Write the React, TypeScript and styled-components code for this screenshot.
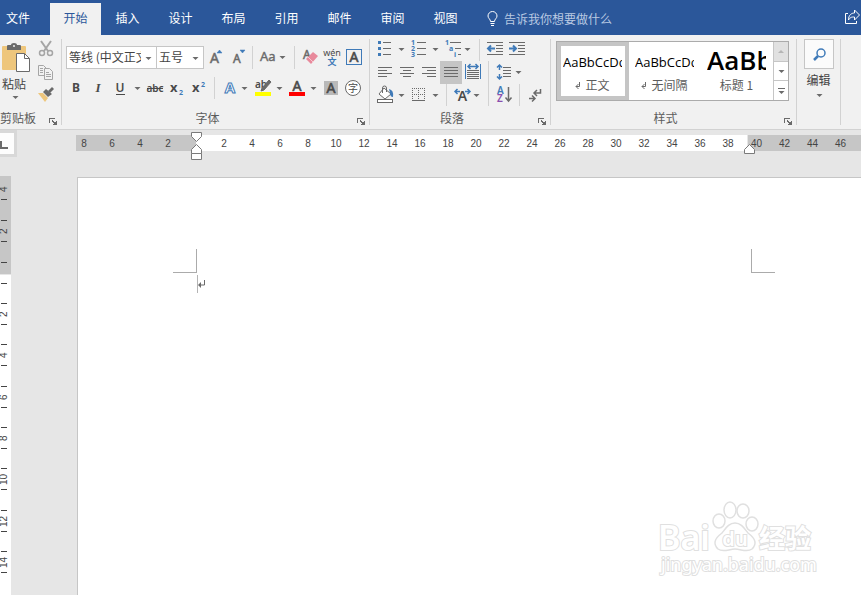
import React from "react";
import styled, { createGlobalStyle } from "styled-components";

const UI_FONT = '"Noto Sans", "Noto Sans CJK SC", sans-serif';
const CJK_FONT = '"Noto Sans CJK SC", sans-serif';
const PREVIEW_FONT = '"Open Sans", "Noto Sans CJK SC", sans-serif';

const GREY = "#6a6a6a";
const DARK = "#4a4a4a";
const BLUE = "#3f7ab8";

const GlobalStyle = createGlobalStyle`
  *, *::before, *::after { box-sizing: border-box; }
  body { margin: 0; overflow: hidden; font-family: ${CJK_FONT}; font-size: 12px; color: #444; }
  button, select { font: inherit; color: inherit; }
  p { margin: 0; }
`;

const AppShell = styled.div`
  display: flex;
  flex-direction: column;
  height: 100vh;
  background: #e6e6e6;
  overflow: hidden;
`;

/* ---------- tab strip ---------- */

const TabStrip = styled.nav`
  display: flex;
  align-items: flex-end;
  flex: none;
  height: 35px;
  background: #2b579a;
`;

const Tab = styled.button<{ $active?: boolean; $file?: boolean }>`
  width: ${(p) => (p.$file ? 50 : p.$active ? 51 : 53)}px;
  height: 32px;
  padding: ${(p) => (p.$file ? "0 0 4px 6px" : "0 0 4px")};
  text-align: ${(p) => (p.$file ? "left" : "center")};
  border: 0;
  background: ${(p) => (p.$active ? "#f1f1f1" : "transparent")};
  color: ${(p) => (p.$active ? "#2b579a" : "#fff")};
`;

const TellMe = styled.button`
  display: flex;
  align-items: center;
  gap: 6px;
  height: 32px;
  margin-left: 15px;
  padding: 0 0 2px;
  border: 0;
  background: transparent;
  color: #b9c9e2;
`;

const ShareButton = styled.button`
  width: 17px;
  height: 32px;
  margin-left: auto;
  padding: 0;
  border: 0;
  background: transparent;
  overflow: hidden;
`;

/* ---------- ribbon ---------- */

const Ribbon = styled.div`
  display: flex;
  flex: none;
  padding: 4px 0;
  height: 95px;
  background: #f1f1f1;
  border-bottom: 1px solid #d2d2d2;
`;

const GroupBox = styled.section<{ $w: number }>`
  display: flex;
  flex-direction: column;
  flex: none;
  width: ${(p) => p.$w}px;
  height: 86px;
  border-right: 1px solid #d2d2d2;
`;

const GroupBody = styled.div`
  display: flex;
  flex: 1;
`;

const GroupFooter = styled.div`
  display: flex;
  align-items: flex-end;
  height: 16px;
`;

const GroupLabel = styled.span<{ $start?: boolean }>`
  flex: 1;
  padding-right: ${(p) => (p.$start ? 0 : 4)}px;
  line-height: 14px;
  text-align: ${(p) => (p.$start ? "left" : "center")};
  color: #5c5c5c;
`;

const Launcher = styled.button`
  width: 12px;
  height: 8px;
  padding: 0;
  border: 0;
  background: transparent;
  display: flex;
`;

const Rows = styled.div<{ $gap: number; $pad: string }>`
  display: flex;
  flex-direction: column;
  gap: ${(p) => p.$gap}px;
  padding: ${(p) => p.$pad};
`;

const ToolRow = styled.div<{ $h: number }>`
  display: flex;
  height: ${(p) => p.$h}px;
`;

const ToolButton = styled.button<{ $on?: boolean }>`
  display: flex;
  flex: none;
  padding: 0;
  border: 0;
  background: ${(p) => (p.$on ? "#c5c5c5" : "transparent")};
`;

const Divider = styled.span<{ $w: number }>`
  flex: none;
  width: ${(p) => p.$w}px;
  background: linear-gradient(#d2d2d2, #d2d2d2) center / 1px 100% no-repeat;
`;

const Combo = styled.label<{ $w: number }>`
  display: grid;
  width: ${(p) => p.$w}px;
  height: 23px;
  margin-right: -1px;
  border: 1px solid #c6c6c6;
  background: #fff;
  grid-template-columns: 1fr 15px;
  align-items: center;
`;

const ComboSelect = styled.select`
  appearance: none;
  width: 100%;
  height: 21px;
  padding: 0 0 2px 2px;
  border: 0;
  background: transparent;
  overflow: hidden;
`;

const Clipboard = styled.div`
  display: grid;
  grid-template-columns: 31px 29px;
`;

const PasteButton = styled.button`
  display: flex;
  flex-direction: column;
  align-items: center;
  padding: 2px 0 0;
  border: 0;
  background: transparent;
  line-height: 18px;
`;

const PasteText = styled.span`
  width: 100%;
  padding-left: 2px;
  text-align: left;
`;

const Stack = styled.div`
  display: flex;
  flex-direction: column;
`;

const Gallery = styled.div`
  display: flex;
  width: 233px;
  height: 60px;
  margin: 2px 0 0 5px;
  border: 1px solid #ababab;
  background: #fff;
`;

const StyleItem = styled.button<{ $selected?: boolean }>`
  display: flex;
  flex-direction: column;
  align-items: stretch;
  width: 72px;
  padding: 0 3px 0 2px;
  border: 4px solid ${(p) => (p.$selected ? "#c5c5c5" : "transparent")};
  background: #fff;
  color: #5c5c5c;
`;

const Preview = styled.span<{ $heading?: boolean }>`
  height: 30px;
  overflow: hidden;
  text-align: left;
  white-space: nowrap;
  color: #000;
  font-family: ${PREVIEW_FONT};
  font-size: ${(p) => (p.$heading ? 26 : 13)}px;
  font-weight: ${(p) => (p.$heading ? 600 : 400)};
  line-height: ${(p) => (p.$heading ? 28 : 32)}px;
`;

const StyleName = styled.span`
  display: flex;
  justify-content: center;
  align-items: center;
  gap: 4px;
  line-height: 18px;
  white-space: nowrap;
`;

const GalleryScroll = styled.div`
  display: grid;
  grid-template-rows: 20px 19px 1fr;
  width: 15px;
  border-left: 1px solid #c6c6c6;
`;

const ScrollStep = styled.button<{ $off?: boolean }>`
  display: flex;
  justify-content: center;
  align-items: center;
  padding: 0;
  border: 0;
  border-bottom: 1px solid #c6c6c6;
  background: ${(p) => (p.$off ? "#e1e1e1" : "#fff")};
  &:last-child { border-bottom: 0; }
`;

const EditButton = styled.button`
  display: flex;
  flex-direction: column;
  align-items: center;
  width: 43px;
  padding: 0;
  border: 0;
  background: transparent;
  line-height: 20px;
`;

const EditIcon = styled.span`
  display: flex;
  width: 30px;
  height: 30px;
  margin-bottom: 1px;
  border: 1px solid #c6c6c6;
  background: #fbfbfb;
`;

/* ---------- work area ---------- */

const RulerRow = styled.div`
  display: flex;
  flex: none;
  height: 46px;
`;

const TabSelector = styled.button`
  display: flex;
  width: 17px;
  height: 27px;
  padding: 0;
  border: solid #d8d8d8;
  border-width: 3px 3px 3px 0;
  background: #fdfdfd;
`;

const Ruler = styled.div`
  position: relative;
  display: flex;
  flex: 1;
  height: 16px;
  margin: 5px 0 0 59px;
  font-family: "Liberation Sans", sans-serif;
  font-size: 10px;
  line-height: 18px;
  color: #444;
`;

const RulerPart = styled.div<{ $kind: "left" | "text" | "right" }>`
  display: flex;
  flex: ${(p) => (p.$kind === "right" ? "1" : "none")};
  justify-content: ${(p) => (p.$kind === "left" ? "flex-end" : "flex-start")};
  width: ${(p) => (p.$kind === "left" ? "120px" : p.$kind === "text" ? "552px" : "auto")};
  padding: ${(p) => (p.$kind === "right" ? "0 0 0 3px" : "0 14px")};
  background: ${(p) => (p.$kind === "text" ? "#fff" : "#c6c6c6")};
  border-right: ${(p) => (p.$kind === "text" ? "1px solid #e6e6e6" : "0")};
  overflow: ${(p) => (p.$kind === "right" ? "hidden" : "visible")};
`;

const RulerMark = styled.span<{ $left?: boolean }>`
  flex: none;
  width: 28px;
  text-align: ${(p) => (p.$left ? "left" : "center")};
`;

const IndentMarker = styled.svg<{ $x: number; $y: number }>`
  position: absolute;
  left: ${(p) => p.$x}px;
  top: ${(p) => p.$y}px;
`;

const WorkArea = styled.div`
  display: flex;
  flex: 1;
  min-height: 0;
`;

const SideRuler = styled.div`
  display: flex;
  flex-direction: column;
  flex: none;
  width: 11px;
  font-family: "Liberation Sans", sans-serif;
  font-size: 10px;
  color: #444;
  overflow: hidden;
`;

const SideMargin = styled.div`
  display: flex;
  flex-direction: column;
  flex: none;
  height: 98px;
  padding-top: 3px;
  background: #c6c6c6;
`;

const SideText = styled.div`
  flex: 1;
  padding-top: 8px;
  margin-top: 1px;
  background: #fff;
`;

const SideCells = styled.div`
  display: grid;
  grid-template-rows: repeat(7, 1fr);
  height: 290px;
  margin-top: 9px;
`;

const SideCell = styled.div`
  display: flex;
  flex-direction: column;
  justify-content: center;
`;

const Tick = styled.i<{ $gap?: number }>`
  display: block;
  flex: none;
  width: 6px;
  height: 1px;
  margin: 0 0 ${(p) => p.$gap || 0}px 1px;
  background: #444;
`;

const SideNumber = styled.span`
  display: block;
  width: 8px;
  height: 20px;
  line-height: 8px;
  text-align: center;
  writing-mode: vertical-rl;
  transform: rotate(180deg);
`;

const Page = styled.main`
  position: relative;
  flex: 1;
  margin: 1px 0 0 66px;
  padding: 71px 0 0 95px;
  border: solid #c6c6c6;
  border-width: 1px 0 0 1px;
  background: #fff;
`;

const CropMarks = styled.div`
  display: grid;
  grid-template-columns: 24px 554px 24px;
  height: 24px;
`;

const CropMark = styled.i<{ $side: "left" | "right" }>`
  border: solid #ababab;
  border-width: ${(p) => (p.$side === "left" ? "0 1px 1px 0" : "0 0 1px 1px")};
`;

const TextLine = styled.p`
  display: flex;
  align-items: flex-start;
  height: 18px;
  margin: 2px 0 0 24px;
  padding-top: 4px;
  border-left: 1px solid #b4b4b4;
`;

const Watermark = styled.svg`
  position: absolute;
  right: 40px;
  bottom: 10px;
`;

/* ---------- drawings ---------- */

function Caret({ x, y, fill = GREY }: { x: number; y: number; fill?: string }) {
  return <path d={`M${x - 2.5} ${y - 1}h6l-3 3z`} fill={fill} />;
}

type ToolProps = {
  name: string;
  w: number;
  h?: number;
  on?: boolean;
  children: React.ReactNode;
};

function Tool({ name, w, h = 22, on, children }: ToolProps) {
  return (
    <ToolButton aria-label={name} title={name} $on={on}>
      <svg width={w} height={h} fill="none" fontFamily={UI_FONT}>
        {children}
      </svg>
    </ToolButton>
  );
}

function Lines({ rows, color = GREY }: { rows: [number, number, number][]; color?: string }) {
  return (
    <path
      stroke={color}
      shapeRendering="crispEdges"
      d={rows.map(([x1, x2, y]) => `M${x1} ${y + 0.5}H${x2}`).join("")}
    />
  );
}

type GroupProps = {
  label: string;
  w: number;
  start?: boolean;
  launcher?: boolean;
  children: React.ReactNode;
};

function Group({ label, w, start, launcher = true, children }: GroupProps) {
  return (
    <GroupBox $w={w} aria-label={label}>
      <GroupBody>{children}</GroupBody>
      {launcher && (
        <GroupFooter>
          <GroupLabel $start={start}>{label}</GroupLabel>
          <Launcher aria-label={`${label}设置`}>
            <svg width="8" height="8" fill="none" stroke={GREY} shapeRendering="crispEdges">
              <path d="M.5 6V1.500H6M3 3.500l4 4M7.500 4v3.500H4" />
              <path d="M5 5h2v2H5z" fill={GREY} stroke="none" />
            </svg>
          </Launcher>
        </GroupFooter>
      )}
    </GroupBox>
  );
}

/* ---------- groups ---------- */

function ClipboardGroup() {
  return (
    <Group label="剪贴板" w={62} start>
      <Clipboard>
        <PasteButton>
          <svg width="31" height="34" fill="none">
            <path d="M3 5h22q1 0 1 1v23H3q-1 0-1-1V6q0-1 1-1z" fill="#eec67c" />
            <path d="M7 9V5q0-1 1-1h3q0-2 3-2t3 2h3q1 0 1 1v4z" fill="#6a6a6a" />
            <circle cx="14" cy="5" r="1" fill="#f1f1f1" />
            <path d="M16.500 12.500h8l5 5v13h-13z" fill="#fff" stroke="#6a6a6a" />
            <path d="M24.500 12.500v5h5" stroke="#6a6a6a" />
          </svg>
          <PasteText>粘贴</PasteText>
          <svg width="31" height="8">
            <Caret x={15} y={4} />
          </svg>
        </PasteButton>
        <Stack>
          <Tool name="剪切" w={29} h={22}>
            <g stroke="#a5a5a5" strokeWidth="1.500">
              <path d="M10 2l7 10M20 2l-7 10" strokeWidth="2" />
              <circle cx="11" cy="14" r="2.500" />
              <circle cx="19" cy="14" r="2.500" />
            </g>
          </Tool>
          <Tool name="复制" w={29} h={23}>
            <g stroke="#a5a5a5" fill="#f1f1f1">
              <path d="M7.500 4.500h5l3 3v7h-8z" />
              <path d="M13.500 7.500h5l3 3v8h-8z" />
              <path d="M15 11.500h3M15 13.500h5M15 15.500h5M9 7.500h3M9 9.500h3M9 11.500h3" />
            </g>
          </Tool>
          <Tool name="格式刷" w={29} h={22}>
            <path d="M7 9l5 0 5 5-3 4z" fill="#eec67c" />
            <path d="M12 8l3-3 6 5-4 3z" fill="#6a6a6a" />
            <path d="M17 7l4-4 2 2-4 4z" fill="#6a6a6a" />
          </Tool>
        </Stack>
      </Clipboard>
    </Group>
  );
}

function FontGroup() {
  return (
    <Group label="字体" w={308}>
      <Rows $gap={8} $pad="7px 0 0 4px">
        <ToolRow $h={23}>
          <Combo $w={91}>
            <ComboSelect aria-label="字体名称">
              <option>等线 (中文正文)</option>
            </ComboSelect>
            <svg width="15" height="20"><Caret x={7} y={10} /></svg>
          </Combo>
          <Combo $w={48}>
            <ComboSelect aria-label="字号">
              <option>五号</option>
            </ComboSelect>
            <svg width="15" height="20"><Caret x={7} y={10} /></svg>
          </Combo>
          <Tool name="增大字号" w={24}>
            <text x="7" y="17" fontSize="14" fill={GREY} stroke={GREY} strokeWidth=".5">A</text>
            <path d="M14 7h5l-2.500-3z" fill={BLUE} stroke={BLUE} strokeWidth=".5" />
          </Tool>
          <Tool name="缩小字号" w={22}>
            <text x="6" y="17" fontSize="12" fill={GREY} stroke={GREY} strokeWidth=".5">A</text>
            <path d="M13 4h5l-2.500 3z" fill={BLUE} stroke={BLUE} strokeWidth=".5" />
          </Tool>
          <Divider $w={7} />
          <Tool name="更改大小写" w={34}>
            <text x="4" y="15" fontSize="13" fill={GREY} stroke={GREY} strokeWidth=".4">Aa</text>
            <Caret x={26} y={11} />
          </Tool>
          <Divider $w={9} />
          <Tool name="清除所有格式" w={22}>
            <text x="4" y="13" fontSize="12" fill={GREY} stroke={GREY} strokeWidth=".5">A</text>
            <path d="M14 6l5 4-7 8-5-5z" fill="#e8899b" />
            <path d="M9 11l5 5" stroke="#f7c8d1" />
          </Tool>
          <Tool name="拼音指南" w={22}>
            <text x="11" y="10" fontSize="9" textAnchor="middle" fill={DARK}>wén</text>
            <text x="11" y="19" fontSize="9" fontWeight="700" textAnchor="middle" fill={BLUE}>文</text>
          </Tool>
          <Tool name="字符边框" w={22}>
            <rect x="3.500" y="3.500" width="15" height="15" stroke={BLUE} />
            <text x="11" y="16" fontSize="14" textAnchor="middle" fill={DARK} stroke={DARK} strokeWidth=".6">A</text>
          </Tool>
        </ToolRow>
        <ToolRow $h={22}>
          <Tool name="加粗" w={21}>
            <text x="10" y="15" fontSize="12" fontWeight="700" textAnchor="middle" fill={DARK}>B</text>
          </Tool>
          <Tool name="倾斜" w={22}>
            <text x="11" y="15" fontSize="13" fontWeight="700" fontStyle="italic" textAnchor="middle" fill={DARK} fontFamily='"Liberation Serif", serif'>I</text>
          </Tool>
          <Tool name="下划线" w={35}>
            <text x="11" y="15" fontSize="12" fontWeight="600" textAnchor="middle" fill={DARK}>U</text>
            <Lines rows={[[7, 16, 17]]} color={DARK} />
            <Caret x={28} y={11} />
          </Tool>
          <Tool name="删除线" w={22}>
            <text x="11" y="15" fontSize="10" fontWeight="600" textAnchor="middle" fill={DARK}>abc</text>
            <Lines rows={[[3, 19, 11]]} color={DARK} />
          </Tool>
          <Tool name="下标" w={22}>
            <text x="4" y="15" fontSize="13" fontWeight="700" fill={DARK}>x</text>
            <text x="13" y="18" fontSize="7" fontWeight="700" fill={BLUE}>2</text>
          </Tool>
          <Tool name="上标" w={22}>
            <text x="4" y="15" fontSize="13" fontWeight="700" fill={DARK}>x</text>
            <text x="13" y="10" fontSize="7" fontWeight="700" fill={BLUE}>2</text>
          </Tool>
          <Divider $w={9} />
          <Tool name="文本效果" w={33}>
            <text x="11" y="16" fontSize="15" fontWeight="700" textAnchor="middle" fill="#fff" stroke={BLUE}>A</text>
            <Caret x={25} y={11} />
          </Tool>
          <Tool name="突出显示颜色" w={34}>
            <text x="3" y="11" fontSize="10" fontWeight="600" fill={DARK}>ab</text>
            <path d="M17 3l2 2-7 8-3 1 1-3z" fill={GREY} stroke={GREY} />
            <path d="M3 15h16v4H3z" fill="#ff0" />
            <Caret x={27} y={11} />
          </Tool>
          <Tool name="字体颜色" w={34}>
            <text x="11" y="14" fontSize="14" textAnchor="middle" fill={DARK} stroke={DARK} strokeWidth=".6">A</text>
            <path d="M3 15h16v4H3z" fill="#f00" />
            <Caret x={27} y={11} />
          </Tool>
          <Tool name="字符底纹" w={22}>
            <path d="M4 4h14v14H4z" fill="#b9b9b9" />
            <text x="11" y="16" fontSize="14" textAnchor="middle" fill={DARK} stroke={DARK} strokeWidth=".6">A</text>
          </Tool>
          <Tool name="带圈字符" w={22}>
            <circle cx="11" cy="11" r="7.500" fill="#fff" stroke={GREY} />
            <text x="11" y="15" fontSize="10" textAnchor="middle" fill={DARK}>字</text>
          </Tool>
        </ToolRow>
      </Rows>
    </Group>
  );
}

function ParagraphGroup() {
  return (
    <Group label="段落" w={181}>
      <Rows $gap={0} $pad="0 0 0 3px">
        <ToolRow $h={22}>
          <Tool name="项目符号" w={34}>
            <path d="M5 2h3v3H5zM5 8h3v3H5zM5 14h3v3H5z" fill={BLUE} />
            <Lines rows={[[10, 18, 3], [10, 18, 9], [10, 18, 15]]} />
            <Caret x={28} y={10} />
          </Tool>
          <Tool name="编号" w={34}>
            <g fill={BLUE} fontSize="7" fontWeight="700">
              <text x="4" y="6">1</text>
              <text x="4" y="12">2</text>
              <text x="4" y="18">3</text>
            </g>
            <Lines rows={[[10, 19, 3], [10, 19, 9], [10, 19, 15]]} />
            <Caret x={28} y={10} />
          </Tool>
          <Tool name="多级列表" w={34}>
            <g fill={BLUE} fontSize="7" fontWeight="700">
              <text x="4" y="6">1</text>
              <text x="8" y="12">a</text>
              <text x="13" y="18">i</text>
            </g>
            <Lines rows={[[9, 20, 3], [14, 20, 9], [17, 20, 15]]} />
            <Caret x={26} y={10} />
          </Tool>
          <Divider $w={8} />
          <Tool name="减少缩进量" w={22}>
            <Lines rows={[[4, 20, 3], [13, 20, 6], [13, 20, 9], [13, 20, 12], [4, 20, 15]]} />
            <path d="M12 9.500H5M8 6.500l-3 3 3 3" stroke={BLUE} strokeWidth="2" />
          </Tool>
          <Tool name="增加缩进量" w={22}>
            <Lines rows={[[4, 20, 3], [13, 20, 6], [13, 20, 9], [13, 20, 12], [4, 20, 15]]} />
            <path d="M4 9.500h7M8 6.500l3 3-3 3" stroke={BLUE} strokeWidth="2" />
          </Tool>
        </ToolRow>
        <ToolRow $h={23}>
          <Tool name="左对齐" w={23} h={23}>
            <Lines rows={[[5, 19, 6], [5, 14, 9], [5, 19, 12], [5, 14, 15]]} />
          </Tool>
          <Tool name="居中" w={22} h={23}>
            <Lines rows={[[4, 18, 6], [7, 15, 9], [4, 18, 12], [7, 15, 15]]} />
          </Tool>
          <Tool name="右对齐" w={22} h={23}>
            <Lines rows={[[4, 18, 6], [9, 18, 9], [4, 18, 12], [9, 18, 15]]} />
          </Tool>
          <Tool name="两端对齐" w={22} h={23} on>
            <Lines rows={[[4, 18, 6], [4, 18, 9], [4, 18, 12], [4, 18, 15]]} />
          </Tool>
          <Tool name="分散对齐" w={22} h={23}>
            <path d="M3.500 3v15M18.500 3v15" stroke={BLUE} />
            <path d="M6 5.500h10M8.500 3L6 5.500 8.500 8M13.500 3l2.500 2.500L13.500 8" stroke={BLUE} strokeWidth="1.500" />
            <Lines rows={[[5, 17, 9], [5, 17, 11], [5, 17, 13], [5, 17, 15], [5, 17, 17]]} />
          </Tool>
          <Divider $w={9} />
          <Tool name="行和段落间距" w={34} h={23}>
            <path d="M6.500 4v5M6.500 13v5M4 6.500L6.500 4 9 6.500M4 15.500L6.500 18 9 15.500" stroke={BLUE} strokeWidth="1.500" />
            <Lines rows={[[10, 18, 6], [10, 18, 9], [10, 18, 12], [10, 18, 15]]} />
            <Caret x={25} y={11} />
          </Tool>
        </ToolRow>
        <ToolRow $h={22}>
          <Tool name="底纹" w={34}>
            <path d="M11 4l7 6-6 5-6-5z" fill="#fff" stroke={GREY} />
            <path d="M9.500 9V4q0-2 2-2t2 2v4" stroke={GREY} />
            <path d="M16 5q5 1 4 8-3 0-3-4z" fill={BLUE} />
            <rect x="4.500" y="15.500" width="15" height="3" fill="#fff" stroke={GREY} />
            <Caret x={28} y={11} />
          </Tool>
          <Tool name="边框" w={34}>
            <path d="M5 4.500h13M5 10.500h13M5.500 4v12M11.500 4v12M17.500 4v12" stroke={GREY} strokeDasharray="1 1" shapeRendering="crispEdges" />
            <Lines rows={[[5, 18, 16]]} />
            <Caret x={28} y={11} />
          </Tool>
          <Divider $w={10} />
          <Tool name="中文版式" w={33}>
            <text x="11.500" y="17" fontSize="14" fontWeight="600" textAnchor="middle" fill={DARK}>A</text>
            <path d="M9 7.500H4M6.500 5L4 7.500 6.500 10M14 7.500h5M16.500 5L19 7.500 16.500 10" stroke={BLUE} strokeWidth="1.500" />
            <Caret x={25} y={11} />
          </Tool>
          <Divider $w={9} />
          <Tool name="排序" w={22}>
            <text x="4" y="10" fontSize="10" fontWeight="600" fill={BLUE}>A</text>
            <text x="4" y="18" fontSize="10" fontWeight="600" fill="#8a4fae">Z</text>
            <path d="M15.500 3v14M12.500 13.500l3 3.500 3-3.500" stroke={GREY} strokeWidth="1.500" />
          </Tool>
          <Divider $w={9} />
          <Tool name="显示编辑标记" w={22}>
            <path d="M16.500 5v4h-6M13 6l-3 3 3 3" stroke={GREY} strokeWidth="1.500" />
            <path d="M5 14.500h6M8 11.500l3 3-3 3" stroke={GREY} strokeWidth="1.500" />
          </Tool>
        </ToolRow>
      </Rows>
    </Group>
  );
}

function StyleMark() {
  return (
    <svg width="6" height="8" fill="none" stroke={GREY}>
      <path d="M4.500 1v4.500H1M3.500 3L1 5.500 3.500 8" />
    </svg>
  );
}

const STYLES = [
  { name: "正文", mark: true, selected: true },
  { name: "无间隔", mark: true },
  { name: "标题 1", heading: true },
];

function StylesGroup() {
  return (
    <Group label="样式" w={246}>
      <Gallery>
        {STYLES.map((s) => (
          <StyleItem key={s.name} $selected={s.selected}>
            <Preview $heading={s.heading}>AaBbCcDd</Preview>
            <StyleName>
              {s.mark && <StyleMark />}
              {s.name}
            </StyleName>
          </StyleItem>
        ))}
        <GalleryScroll>
          <ScrollStep aria-label="向上" $off>
            <svg width="8" height="5"><path d="M1 4h6L4 1z" fill="#b5b5b5" /></svg>
          </ScrollStep>
          <ScrollStep aria-label="向下">
            <svg width="8" height="5"><Caret x={4} y={2} /></svg>
          </ScrollStep>
          <ScrollStep aria-label="其他">
            <svg width="8" height="8"><path d="M1 1h7v1H1z" fill={GREY} /><Caret x={4} y={5} /></svg>
          </ScrollStep>
        </GalleryScroll>
      </Gallery>
    </Group>
  );
}

function EditGroup() {
  return (
    <Group label="编辑" w={44} launcher={false}>
      <EditButton>
        <EditIcon>
          <svg width="28" height="28" fill="none" stroke={BLUE}>
            <circle cx="16" cy="13" r="4" strokeWidth="1.500" />
            <path d="M13 16l-4 4" strokeWidth="2.500" />
          </svg>
        </EditIcon>
        编辑
        <svg width="10" height="8"><Caret x={5} y={5} /></svg>
      </EditButton>
    </Group>
  );
}

/* ---------- rulers and page ---------- */

const evens = (from: number, to: number) =>
  Array.from({ length: (to - from) / 2 + 1 }, (_, i) => from + i * 2);

function HorizontalRuler() {
  return (
    <RulerRow>
      <Stack>
        <TabSelector aria-label="制表符">
          <svg width="14" height="21"><path d="M0 8h2v6h6v2H0z" fill={GREY} /></svg>
        </TabSelector>
      </Stack>
      <Ruler>
        <RulerPart $kind="left">
          {evens(2, 8).reverse().map((n) => <RulerMark key={n}>{n}</RulerMark>)}
        </RulerPart>
        <RulerPart $kind="text">
          {evens(2, 38).map((n) => <RulerMark key={n}>{n}</RulerMark>)}
        </RulerPart>
        <RulerPart $kind="right">
          {evens(40, 46).map((n) => <RulerMark key={n} $left>{n}</RulerMark>)}
        </RulerPart>
        <IndentMarker $x={115} $y={-3} width="12" height="29" fill="#fff" stroke="#7a7a7a">
          <path d="M.5.5h10v4l-5 5-5-5z" />
          <path d="M.5 21.500v-4l5-5 5 5v4z" />
          <path d="M.5 21.500h10v6H.5z" />
        </IndentMarker>
        <IndentMarker $x={668} $y={9} width="12" height="12" fill="#fff" stroke="#7a7a7a">
          <path d="M.5 9.500v-4l5-5 5 5v4z" />
        </IndentMarker>
      </Ruler>
    </RulerRow>
  );
}

function VerticalRuler() {
  return (
    <SideRuler>
      <SideMargin>
        <SideNumber>4</SideNumber>
        <Tick $gap={20} />
        <Tick />
        <SideNumber>2</SideNumber>
        <Tick $gap={20} />
        <Tick />
      </SideMargin>
      <SideText>
        <Tick />
        <SideCells>
          {evens(2, 14).map((n) => (
            <SideCell key={n}>
              <Tick />
              <SideNumber>{n}</SideNumber>
              <Tick />
            </SideCell>
          ))}
        </SideCells>
      </SideText>
    </SideRuler>
  );
}

function BaiduMark() {
  return (
    <Watermark width="166" height="86" fill="#fff" stroke="#e0e0e0" fontFamily={UI_FONT}>
      <text x="3" y="51" fontSize="34" fontWeight="600" strokeWidth="2" paintOrder="stroke">Bai</text>
      <g strokeWidth="1.500">
        <ellipse cx="64" cy="22" rx="6" ry="7" />
        <ellipse cx="75" cy="11" rx="6" ry="8" />
        <ellipse cx="88" cy="12" rx="6" ry="7" />
        <ellipse cx="97" cy="25" rx="6" ry="7" />
        <path d="M80 24c6 0 9 5 13 10 8 6 9 11 4 16-5 4-11 0-17 0s-12 4-17 0c-5-5-4-10 4-16 4-5 7-10 13-10z" />
      </g>
      <text x="80" y="47" fontSize="20" fontWeight="600" textAnchor="middle" strokeWidth="2" paintOrder="stroke">du</text>
      <text x="104" y="49" fontSize="26" fontWeight="700" fontFamily={CJK_FONT} strokeWidth="2" paintOrder="stroke">经验</text>
      <text x="6" y="72" fontSize="18" strokeWidth="2" paintOrder="stroke">jingyan.baidu.com</text>
    </Watermark>
  );
}

const TABS = ["插入", "设计", "布局", "引用", "邮件", "审阅", "视图"];

export default function App() {
  return (
    <AppShell>
      <GlobalStyle />
      <TabStrip>
        <Tab $file>文件</Tab>
        <Tab $active>开始</Tab>
        {TABS.map((t) => <Tab key={t}>{t}</Tab>)}
        <TellMe>
          <svg width="11" height="15" fill="none" stroke="#fff">
            <path d="M3.500 10.500C3.500 8 1 7.500 1 5a4.500 4.500 0 0 1 9 0c0 2.500-2.500 3-2.500 5.500zM3.500 12.500h4M4 14.500h3" />
          </svg>
          告诉我你想要做什么
        </TellMe>
        <ShareButton aria-label="共享">
          <svg width="17" height="32" fill="none" stroke="#fff">
            <path d="M4 10.500H1.500v10h11V18" />
            <path d="M4.500 17c0-5 3-7 6-7V7l5 5-5 5v-3c-3 0-4 0-6 3z" />
          </svg>
        </ShareButton>
      </TabStrip>
      <Ribbon>
        <ClipboardGroup />
        <FontGroup />
        <ParagraphGroup />
        <StylesGroup />
        <EditGroup />
      </Ribbon>
      <HorizontalRuler />
      <WorkArea>
        <VerticalRuler />
        <Page>
          <CropMarks>
            <CropMark $side="left" />
            <span />
            <CropMark $side="right" />
          </CropMarks>
          <TextLine role="textbox" aria-label="正文">
            <svg width="8" height="10" fill="none" stroke={GREY}>
              <path d="M6.500 1v5H1" />
              <path d="M0 6l3-3v6z" fill={GREY} stroke="none" />
            </svg>
          </TextLine>
          <BaiduMark />
        </Page>
      </WorkArea>
    </AppShell>
  );
}
